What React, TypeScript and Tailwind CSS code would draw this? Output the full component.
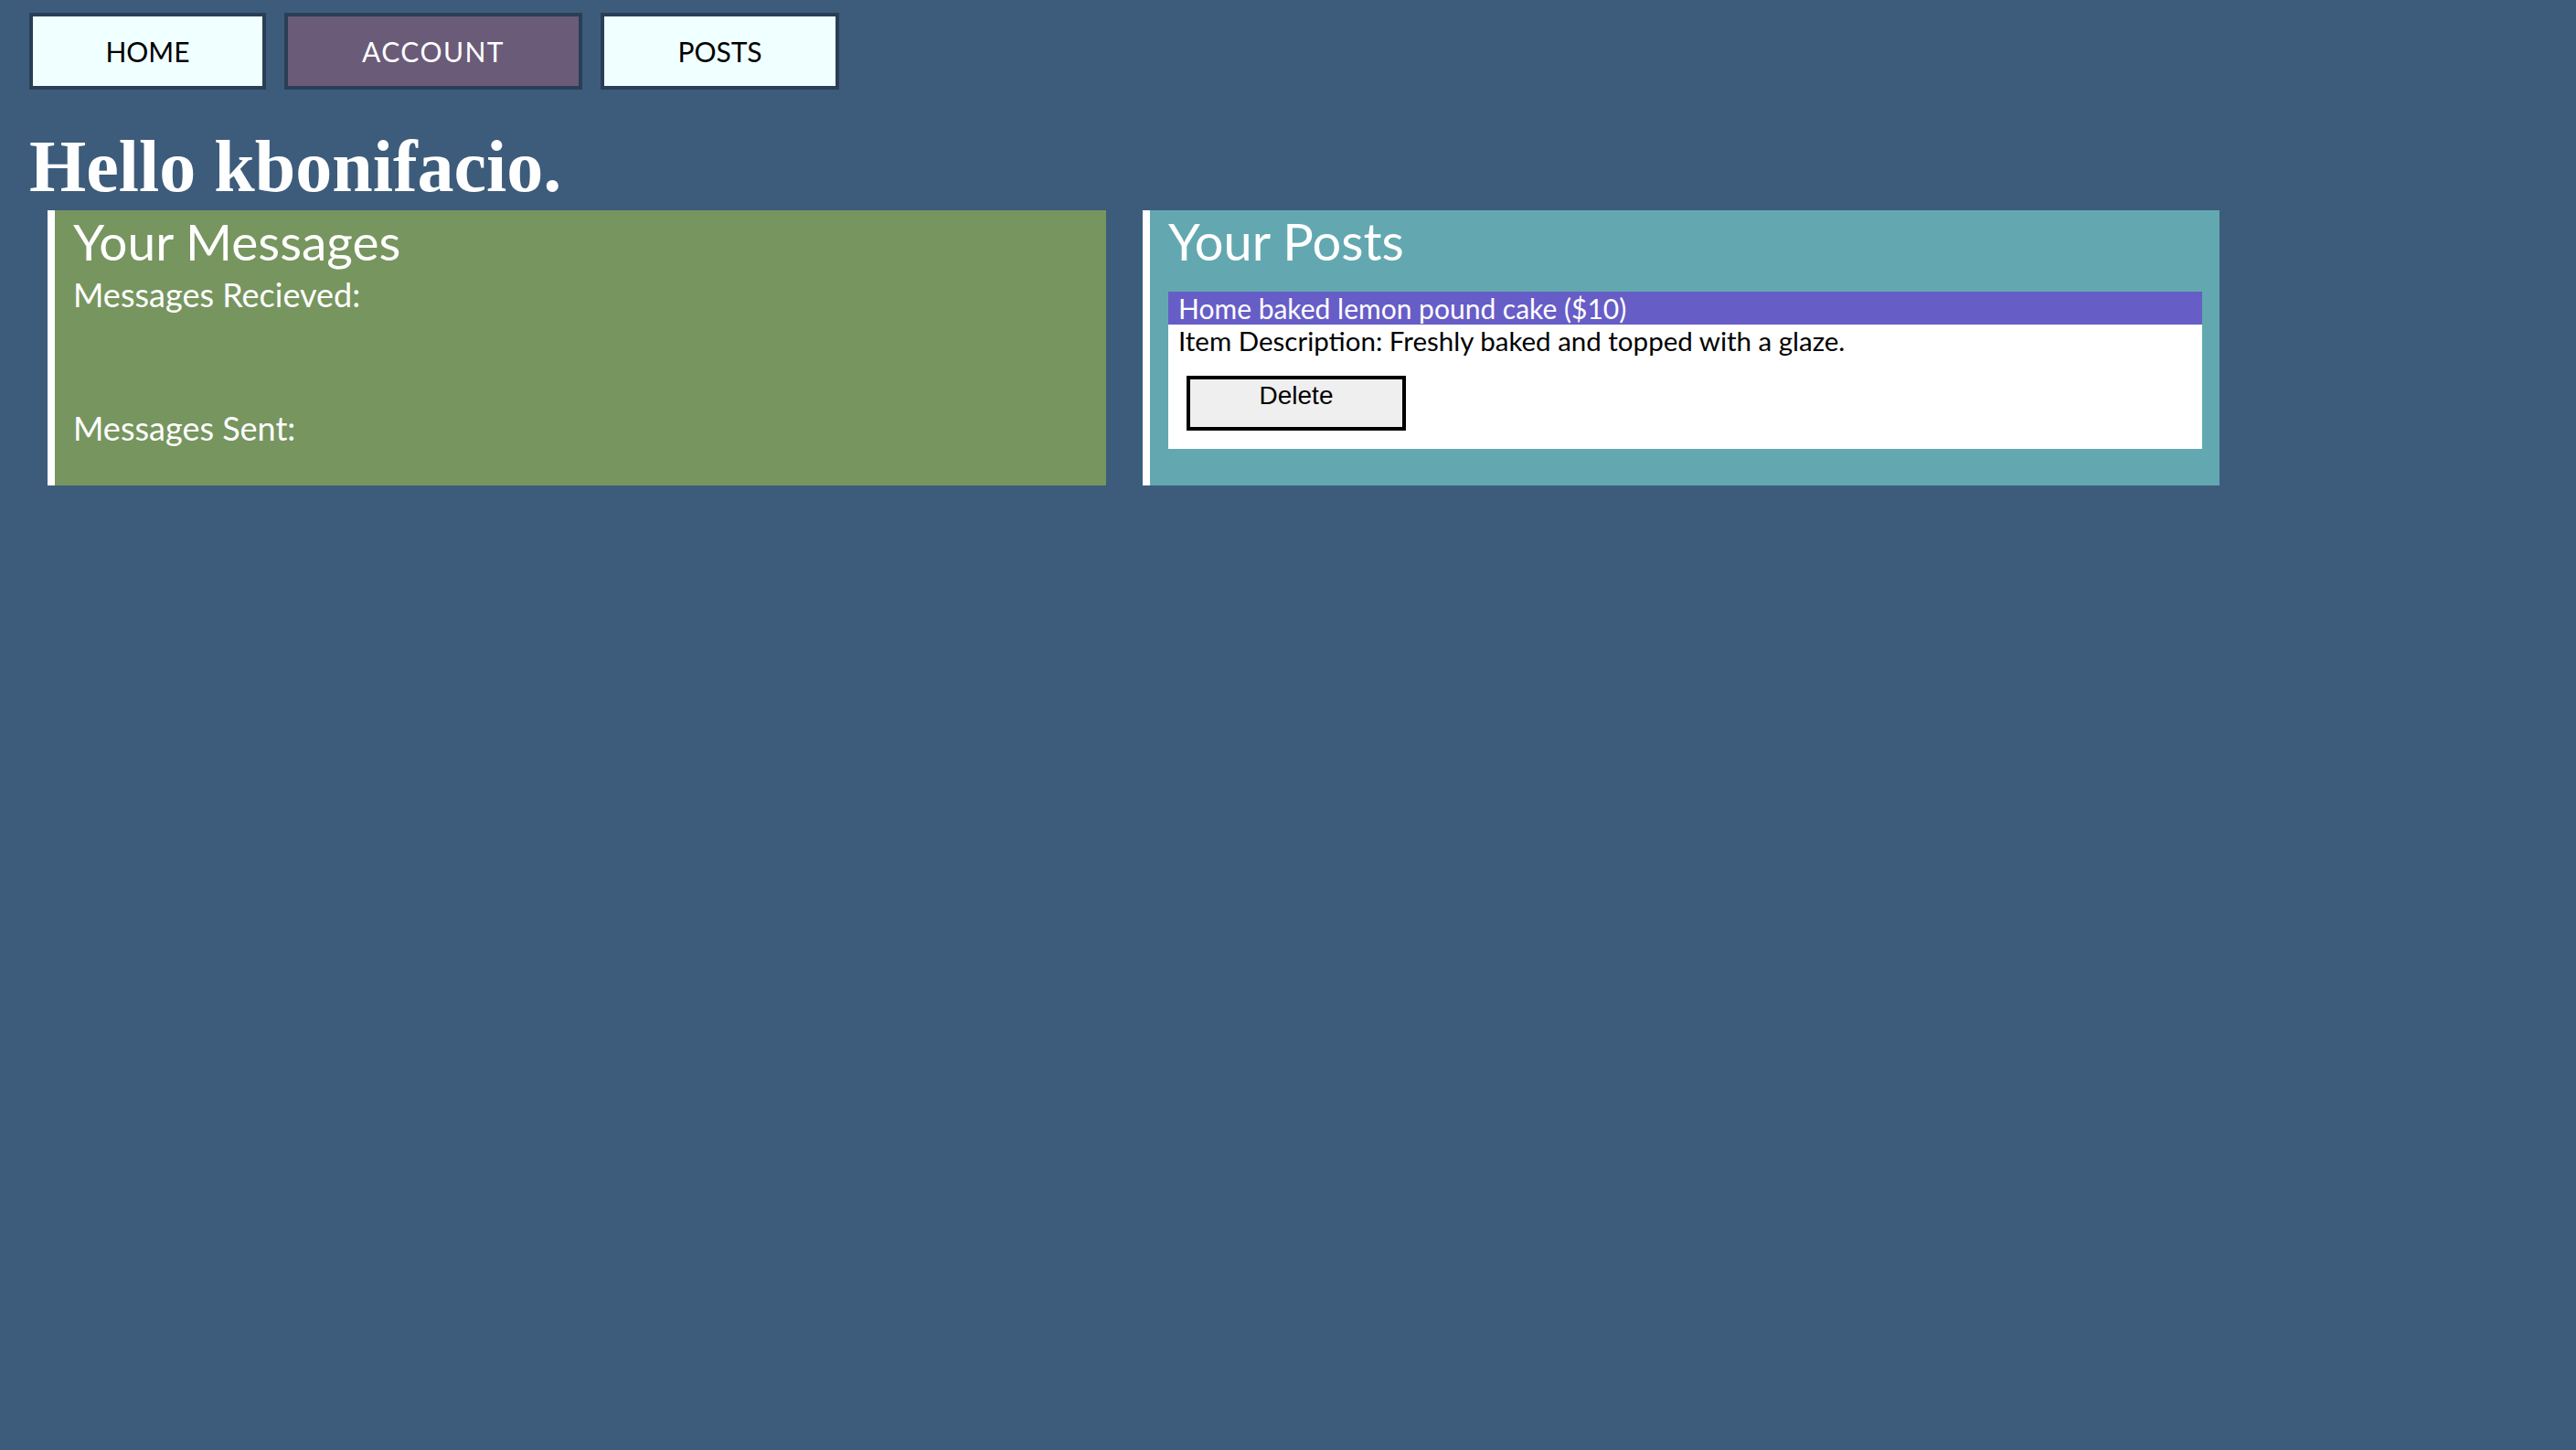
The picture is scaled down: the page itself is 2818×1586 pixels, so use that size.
import React from "react";

const gill = { fontFamily: "Lato, 'Open Sans', sans-serif" };

export default function App() {
  return (
    <div className="min-h-screen w-full bg-[#3d5c7b]" style={gill}>
      <nav className="flex gap-[20px] pl-[32px] pt-[14px]">
        <button className="h-[84px] w-[259px] border-4 border-[#2a3f56] bg-[#f0ffff] text-[30px] leading-[76px] text-black">
          HOME
        </button>
        <button className="h-[84px] w-[326px] border-4 border-[#2a3f56] bg-[#6a5b78] text-[30px] leading-[76px] tracking-[1.5px] text-white">
          ACCOUNT
        </button>
        <button className="h-[84px] w-[261px] border-4 border-[#2a3f56] bg-[#f0ffff] text-[30px] leading-[76px] text-black">
          POSTS
        </button>
      </nav>

      <h1
        className="mt-[44px] pl-[32px] text-[80px] font-bold leading-[80px] text-white"
        style={{ fontFamily: "'Liberation Serif', 'Times New Roman', serif" }}
      >
        Hello kbonifacio.
      </h1>

      <div className="mt-[8px] flex gap-[40px] pl-[52px]">
        <section className="h-[301px] w-[1158px] border-l-8 border-white bg-[#77955f] pl-[20px] pt-[4px] text-white">
          <h2 className="text-[55px] leading-[60px]">Your Messages</h2>
          <h3 className="mt-[8px] text-[36px] leading-[40px]">Messages Recieved:</h3>
          <h3 className="mt-[106px] text-[36px] leading-[40px]">Messages Sent:</h3>
        </section>

        <section className="h-[301px] w-[1178px] border-l-8 border-white bg-[#63a8b0] px-[20px] pt-[4px]">
          <h2 className="text-[56px] leading-[60px] text-white">Your Posts</h2>
          <div className="mt-[25px] w-[1131px] bg-white pb-[20px]">
            <div className="h-[36px] bg-[#675dc6] pl-[11px] text-[30px] leading-[36px] text-white">
              Home baked lemon pound cake ($10)
            </div>
            <div className="pl-[11px] text-[29.5px] leading-[36px] text-black">
              Item Description: Freshly baked and topped with a glaze.
            </div>
            <div className="mt-[20px] pl-[20px]">
              <button
                className="flex h-[60px] w-[240px] items-start justify-center border-4 border-black bg-[#efefef] pt-[2px] text-[28px] leading-[32px] text-black"
                style={{ fontFamily: "'Liberation Sans', Arial, sans-serif" }}
              >
                Delete
              </button>
            </div>
          </div>
        </section>
      </div>
    </div>
  );
}
